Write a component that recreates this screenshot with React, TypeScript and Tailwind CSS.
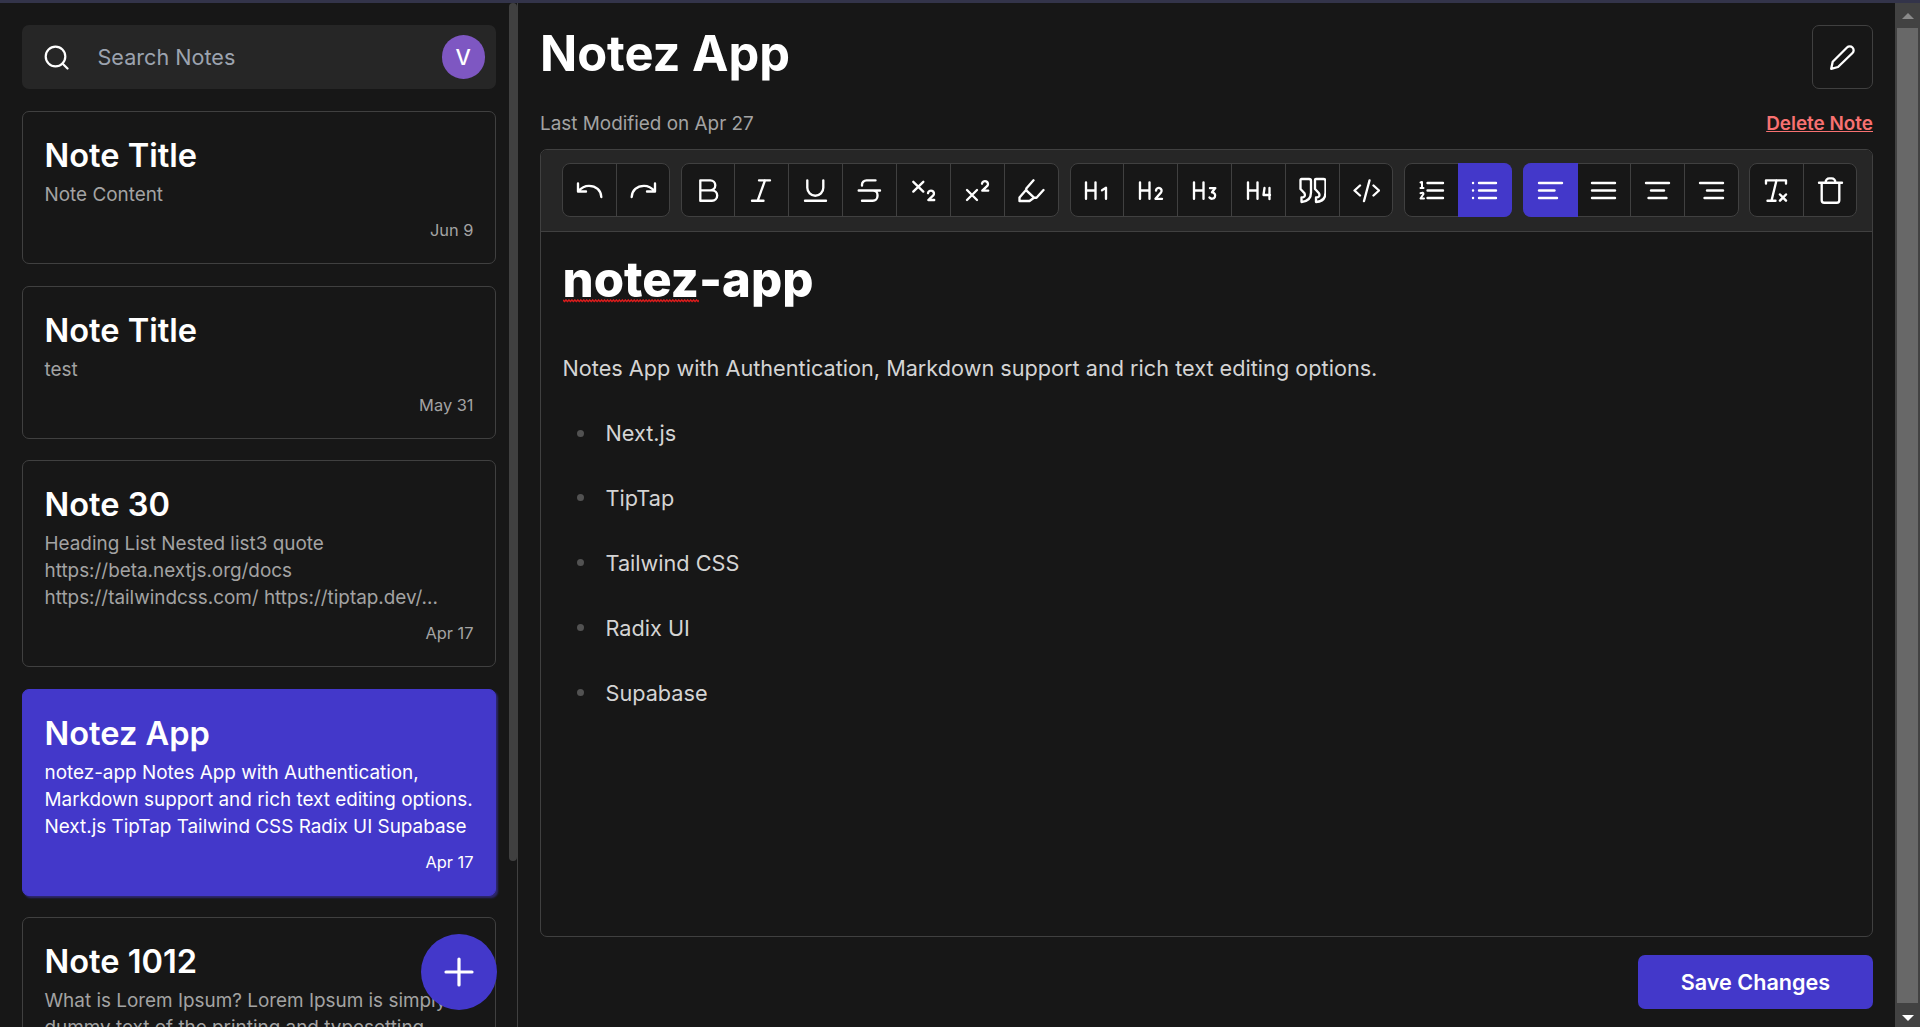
import React from "react";

type P = { children: React.ReactNode };
const Ico = ({ children }: P) => (
  <svg width="27" height="27" viewBox="0 0 27 27" fill="none" stroke="currentColor" strokeWidth="2.35" strokeLinecap="round" strokeLinejoin="round" className="block shrink-0">{children}</svg>
);

const icons: Record<string, React.ReactNode> = {
  undo: <Ico><path d="M2 6.500v8h8M2.500 14C5 11 9 8.800 13 8.800c7 0 12 4.500 12.300 11.200" /></Ico>,
  redo: <Ico><path d="M25 6.500v8h-8M24.500 14C22 11 18 8.800 14 8.800C7 8.800 2 13.300 1.700 20" /></Ico>,
  bold: <Ico><path d="M5.300 3.300h10a5 5 0 0 1 0 10H5.300zM5.300 13.300H17a5.200 5.200 0 0 1 0 10.400H5.300z" /></Ico>,
  italic: <Ico><path d="M11 3.300h11M4 23.700H15.500M17 3.300L9.700 23.700" /></Ico>,
  underline: <Ico><path d="M5.300 3.300v7.500a8 8 0 0 0 16 0V3.300M3 23.700h21" /></Ico>,
  strike: <Ico><path d="M19.500 3.300H10.500a4.500 4.500 0 0 0-4.500 4.500V8.500M2.700 13.500h21.300M15.500 13.500H17a4.500 4.500 0 0 1 4.500 4.500v1a4.700 4.700 0 0 1-4.700 4.700H6" /></Ico>,
  sub: <Ico><path d="M3.300 4.800l10 9.800M13.300 4.800l-10 9.800" /><path d="M18 16.200a3 2.900 0 1 1 5.300 2.200L18.300 23h5.900" /></Ico>,
  sup: <Ico><path d="M3 13l10 10M13 13l-10 10" /><path d="M18 6.700a3 2.900 0 1 1 5.300 2.200L18.300 13.600h5.900" /></Ico>,
  marker: <Ico><path d="M15.500 3.300L8.300 11.500v1.800l7.700 7.400h2.500L25.500 13M8 13L1.500 20.500V24H11.500l4.500-3.300" /></Ico>,
};

const H = ({ n }: { n: number }) => (
  <Ico>
    <path d="M3 5.300v16.400M12.500 5.300v16.400M3 13.500h9.500" />
    {n === 1 && <path d="M19 13.300l4-2.500v11" />}
    {n === 2 && <path d="M19 13.600a2.800 2.800 0 1 1 5 1.800L18.500 21.800H25" />}
    {n === 3 && <path d="M19 11.100h5.300l-3.300 4.200a3.200 3.200 0 1 1-2.500 5.200" />}
    {n === 4 && <path d="M19.500 11l-1 7h6.500M24.500 11v11" />}
  </Ico>
);
const Lines = ({ r }: { r: [number, number][] }) => (
  <Ico>{r.map(([a, b], i) => <path key={i} d={`M${a} ${6 + i * 7.5}H${b}`} />)}</Ico>
);

const groups: { icon: React.ReactNode; on?: boolean }[][] = [
  [{ icon: icons.undo }, { icon: icons.redo }],
  [{ icon: icons.bold }, { icon: icons.italic }, { icon: icons.underline }, { icon: icons.strike }, { icon: icons.sub }, { icon: icons.sup }, { icon: icons.marker }],
  [
    { icon: <H n={1} /> }, { icon: <H n={2} /> }, { icon: <H n={3} /> }, { icon: <H n={4} /> },
    { icon: <Ico><path d="M2.500 2h7.500a2 2 0 0 1 2 2v11.500c0 5-3 9-9.500 9.500v-4.500c3 0 4.200-1.600 3-4.200L1.500 12V3a1 1 0 0 1 1-1z" /><path d="M17 2h7.500a2 2 0 0 1 2 2v11.500c0 5-3 9-9.500 9.500v-4.500c3 0 4.200-1.600 3-4.200L16 12V3a1 1 0 0 1 1-1z" /></Ico> },
    { icon: <Ico><path d="M7 8.500l-5.500 5L7 18.500M20.500 8.500l5.500 5-5.500 5M16.500 3.500L11 24" /></Ico> },
  ],
  [
    { icon: <Ico><path d="M9.500 6H25M9.500 13.500H25M9.500 21H25" /><path strokeWidth="2" d="M2.500 5.500L4 5v6M2.500 11h3M2.500 16.200q3-1.200 3 .8L2.500 21.500h3.500" /></Ico> },
    { on: true, icon: <Ico><path d="M8 6H25M8 13.500H25M8 21H25M2 6h.1M2 13.500h.1M2 21h.1" /></Ico> },
  ],
  [
    { on: true, icon: <Lines r={[[2, 25], [2, 17.5], [2, 20]]} /> },
    { icon: <Lines r={[[2, 25], [2, 25], [2, 25]]} /> },
    { icon: <Lines r={[[2, 25], [7, 20], [4.5, 22.5]]} /> },
    { icon: <Lines r={[[2, 25], [9, 25], [6.5, 25]]} /> },
  ],
  [
    { icon: <Ico><path d="M3 6.500V3.300h20v3.200M13.500 3.300L8.500 23.700M4.500 23.700h8" /><path strokeWidth="2.500" d="M17 17.500l6 6.200M23 17.500l-6 6.200" /></Ico> },
    { icon: <Ico><path d="M2 5.700h23M4.700 5.700v17.500a2.500 2.500 0 0 0 2.500 2.500h12.600a2.500 2.500 0 0 0 2.500-2.500v-17.500M8.700 5.700v-.7a3.500 3.500 0 0 1 3.500-3.600h2.600a3.500 3.500 0 0 1 3.500 3.600v.7" /></Ico> },
  ],
];

const notes = [
  { t: "Note Title", c: ["Note Content"], d: "Jun 9" },
  { t: "Note Title", c: ["test"], d: "May 31" },
  { t: "Note 30", c: ["Heading List Nested list3 quote", "https://beta.nextjs.org/docs", "https://tailwindcss.com/ https://tiptap.dev/..."], d: "Apr 17" },
  { t: "Notez App", c: ["notez-app Notes App with Authentication,", "Markdown support and rich text editing options.", "Next.js TipTap Tailwind CSS Radix UI Supabase"], d: "Apr 17", on: true },
  { t: "Note 1012", c: ["What is Lorem Ipsum? Lorem Ipsum is simply", "dummy text of the printing and typesetting"], d: "" },
];

const squiggle = "M0 1" + Array.from({ length: 46 }, (_, i) => `L${i * 3 + 1.5} 2.5L${i * 3 + 3} 1`).join("");

export default function App() {
  return (
    <div className="relative flex h-[1027px] w-[1920px] overflow-hidden border-t-[3px] border-[#33344a] bg-[#171717] font-['Inter',sans-serif] text-[18.9px] leading-[27px] text-white">
      <aside className="flex h-full w-[518px] shrink-0 overflow-hidden border-r border-[#404040]">
        <div className="flex w-[509px] shrink-0 flex-col pl-[22px] pr-[13px] pt-[22px]">
          <div className="flex h-[64px] shrink-0 items-center rounded-[7px] bg-[#262626] pl-[22px] pr-[11px]">
            <svg width="25" height="25" viewBox="0 0 25 25" fill="none" stroke="currentColor" strokeWidth="2.2" strokeLinecap="round"><circle cx="11.500" cy="11.500" r="9.800" /><path d="M18.500 18.500L23.500 23.500" /></svg>
            <span className="ml-[28.500px] grow text-[21.600px] text-[#9ca3af]">Search Notes</span>
            <span className="flex size-[43.500px] items-center justify-center rounded-full bg-[#7e57c2] text-[21.600px] font-medium">V</span>
          </div>
          <div className="mt-[22px] flex flex-col gap-[21.600px]">
            {notes.map((n, i) => (
              <article key={i} className={`flex shrink-0 flex-col rounded-[7px] border px-[21.500px] pb-[22px] pt-[23px] ${n.on ? "border-[#4338ca] bg-[#4338ca] text-white shadow-[2px_2px_2px_#4338ca80]" : "border-[#404040] text-[#a3a3a3]"}`}>
                <h2 className="text-[32.600px] font-semibold leading-[40px] text-white">{n.t}</h2>
                <div className="mt-[6px] whitespace-nowrap">{n.c.map((l) => <p key={l}>{l}</p>)}</div>
                <p className="mt-[11px] text-right text-[16.400px] leading-[22px]">{n.d}</p>
              </article>
            ))}
          </div>
        </div>
        <div className="h-[858px] w-[9px] rounded-full bg-[#404040]" />
      </aside>

      <main className="flex w-[1377px] shrink-0 flex-col pl-[22px] pr-[22px]">
        <div className="mt-[22px] flex h-[64px] items-start justify-between">
          <h1 className="text-[48.800px] font-bold leading-[58px]">Notez App</h1>
          <button className="flex h-[64px] w-[61px] items-center justify-center rounded-[7px] border border-[#404040]">
            <svg width="25" height="25" viewBox="0 0 25 25" fill="none" stroke="currentColor" strokeWidth="2.300" strokeLinejoin="round"><path d="M1.200 23.800l1.500-7L17 2.500a3.800 3.800 0 0 1 5.500 5.500L8 22z" /></svg>
          </button>
        </div>
        <div className="mt-[21px] flex justify-between">
          <span className="text-[#a3a3a3]">Last Modified on Apr 27</span>
          <span className="font-semibold text-[#f87171] underline">Delete Note</span>
        </div>
        <section className="mt-[12px] flex h-[788px] flex-col overflow-hidden rounded-[7px] border border-[#404040]">
          <div className="flex h-[82px] shrink-0 items-start gap-[10.800px] border-b border-[#404040] bg-[#262626] pl-[21.400px] pt-[13px]">
            {groups.map((g, i) => (
              <div key={i} className="flex h-[54px] rounded-[8px] border border-[#404040] bg-[#171717]">
                {g.map((b, j) => (
                  <button key={j} className={`flex w-[54px] items-center justify-center first:w-[53.500px] first:rounded-l-[7px] last:w-[52.300px] last:rounded-r-[7px] not-last:border-r ${b.on ? "border-[#4338ca] bg-[#4338ca] shadow-[0_0_0_1px_#4338ca]" : "border-[#404040]"}`}>{b.icon}</button>
                ))}
              </div>
            ))}
          </div>
          <div className="px-[21.500px] pt-[22.500px]">
            <h1 className="text-[49px] font-extrabold leading-[50px]">
              <span className="relative">
                notez
                <svg className="absolute bottom-[6px] left-0 w-full" height="4" viewBox="0 0 138 4" preserveAspectRatio="none" fill="none" stroke="#dc1c1c" strokeWidth="1.500"><path d={squiggle} /></svg>
              </span>-app
            </h1>
            <p className="mt-[43.500px] text-[21.680px] leading-[40px] text-[#d4d4d4]">Notes App with Authentication, Markdown support and rich text editing options.</p>
            <ul className="mt-[25px] flex flex-col gap-[24.900px] text-[21.680px] leading-[40px] text-[#d4d4d4]">
              {["Next.js", "TipTap", "Tailwind CSS", "Radix UI", "Supabase"].map((t) => (
                <li key={t} className="flex items-center gap-[22px] pl-[14px]"><i className="size-[7px] rounded-full bg-[#525252]" />{t}</li>
              ))}
            </ul>
          </div>
        </section>
        <button className="mt-[18px] h-[54px] w-[235px] self-end rounded-[7px] bg-[#4338ca] text-[21.600px] font-semibold">Save Changes</button>
      </main>

      <div className="flex w-[25px] shrink-0 flex-col items-center bg-[#424242]">
        <svg width="23" height="25" viewBox="0 0 23 25"><path d="M6 16h12l-6-6z" fill="#8a8a8a" /></svg>
        <div className="w-[21px] grow bg-[#686868]" />
        <svg width="23" height="24" viewBox="0 0 23 24"><path d="M6 12h12l-6 6z" fill="#fff" /></svg>
      </div>
      <button className="absolute left-[421px] top-[931px] flex size-[76px] items-center justify-center rounded-full bg-[#4338ca]">
        <svg width="30" height="30" viewBox="0 0 30 30" stroke="currentColor" strokeWidth="3.200" strokeLinecap="round"><path d="M15 2v26M2 15h26" /></svg>
      </button>
    </div>
  );
}
